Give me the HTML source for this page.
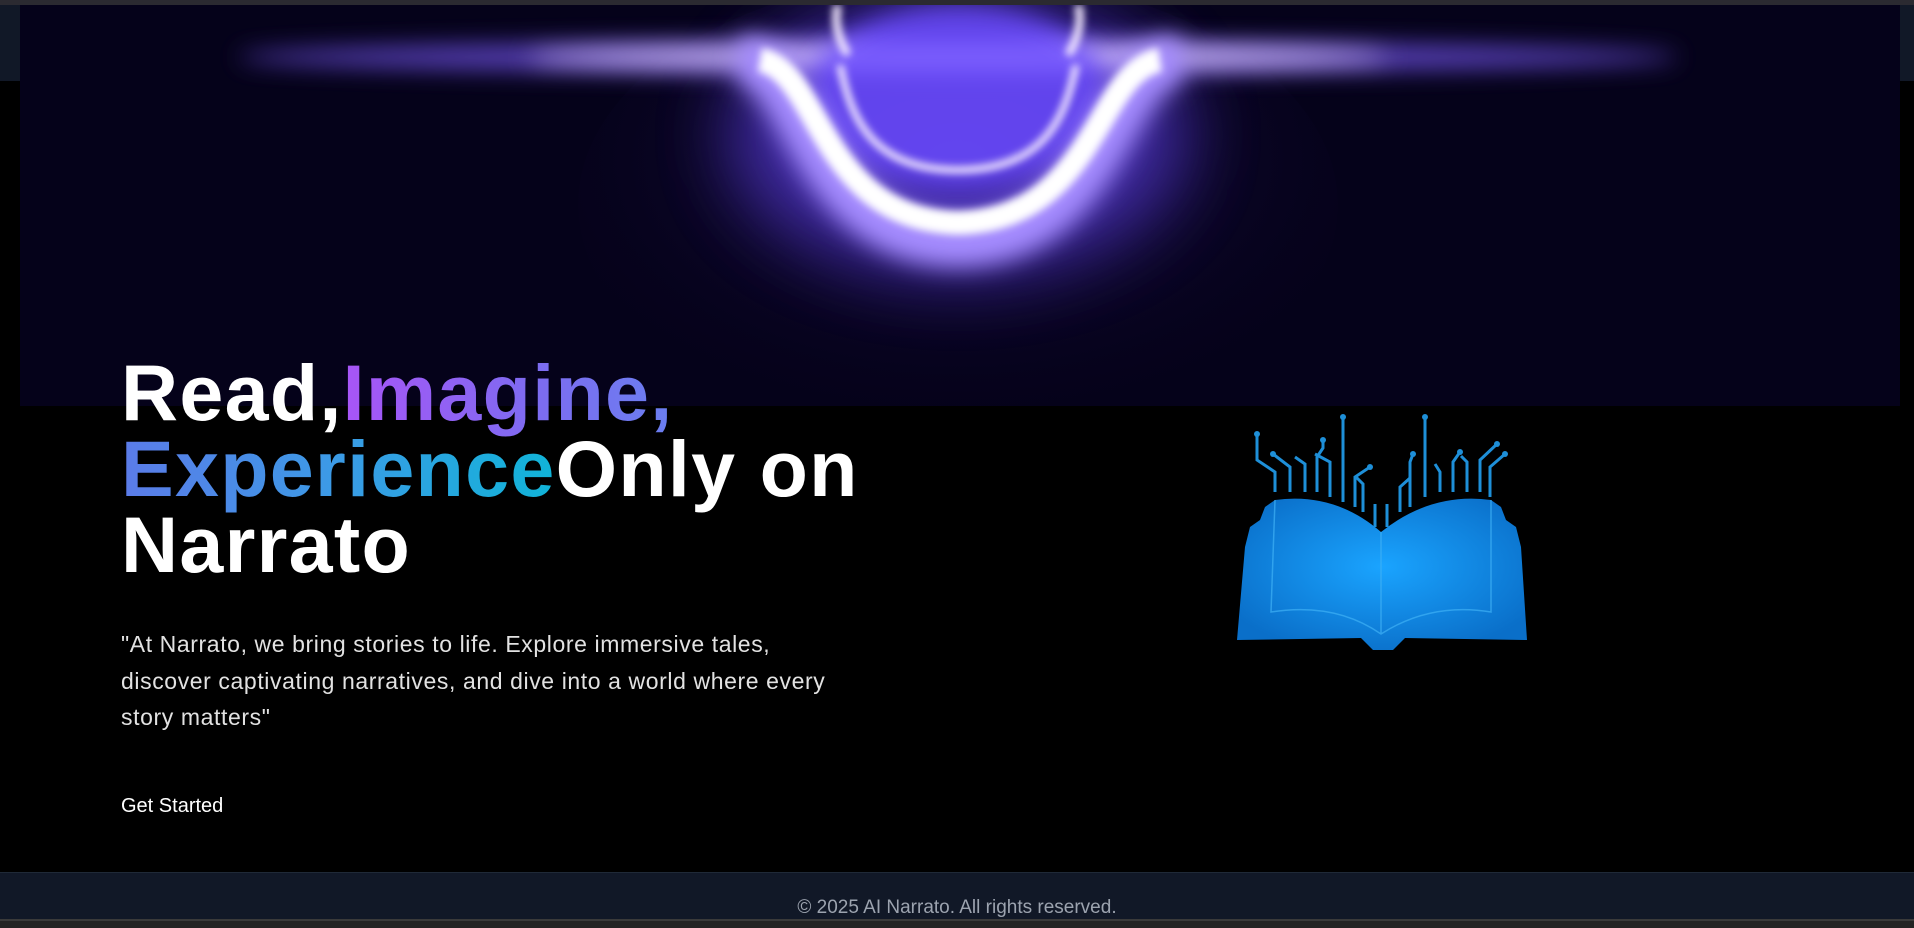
<!DOCTYPE html>
<html><head><meta charset="utf-8"><style>
html,body{margin:0;padding:0;background:#000;width:1914px;height:926px;overflow:hidden;font-family:"Liberation Sans",sans-serif}
.topbar{position:absolute;left:0;top:0;width:1914px;height:5px;background:#2b2a31}
.hdr{position:absolute;left:0;top:5px;width:1914px;height:76px;background:#111827}
.panel{position:absolute;left:20px;top:5px;width:1880px;height:401px}
h1{position:absolute;left:121px;top:355px;margin:0;font-size:79px;line-height:76px;font-weight:bold;color:#fff;letter-spacing:1.3px}
.g1{background:linear-gradient(90deg,#a855f7,#7c6cf0 60%,#6a7ff0);-webkit-background-clip:text;background-clip:text;color:transparent}
.g2{background:linear-gradient(90deg,#5b7be8,#3b9be6 50%,#10b4d8);-webkit-background-clip:text;background-clip:text;color:transparent}
p{position:absolute;left:121px;top:626px;margin:0;width:735px;font-size:23px;line-height:36.6px;color:#e2e2e2;letter-spacing:0.6px}
.btn{position:absolute;left:121px;top:795px;font-size:20px;color:#fff}
.foot{position:absolute;left:0;top:872px;width:1914px;height:47px;background:#111827;border-top:1px solid #1f2937}
.foot span{position:absolute;left:0;width:100%;text-align:center;top:24px;font-size:19px;color:#9ca3af}
.bot{position:absolute;left:0;top:919px;width:1914px;height:7px;background:#232323;border-top:2px solid #3a3a3a}
</style></head><body>
<div class="topbar"></div>
<div class="hdr"></div>
<svg class="panel" viewBox="0 0 1880 401" width="1880" height="401">
<defs>
<filter id="b1" filterUnits="userSpaceOnUse" x="-200" y="-300" width="2300" height="1000"><feGaussianBlur stdDeviation="35"/></filter>
<filter id="b2" filterUnits="userSpaceOnUse" x="-200" y="-300" width="2300" height="1000"><feGaussianBlur stdDeviation="12"/></filter>
<filter id="b3" filterUnits="userSpaceOnUse" x="-200" y="-300" width="2300" height="1000"><feGaussianBlur stdDeviation="4"/></filter>
<radialGradient id="rg" cx="0.5" cy="0.4" r="0.6"><stop offset="0" stop-color="#3a1f8a" stop-opacity=".5"/><stop offset="1" stop-color="#05021a" stop-opacity="0"/></radialGradient>
</defs>
<rect width="1880" height="401" fill="#05021a"/>
<ellipse cx="938" cy="200" rx="380" ry="230" fill="url(#rg)"/>
<ellipse cx="938" cy="130" rx="230" ry="140" fill="#5a3de0" filter="url(#b1)" opacity=".65"/>
<ellipse cx="938" cy="52" rx="720" ry="16" fill="#7d5cff" filter="url(#b2)" opacity=".7"/>
<ellipse cx="938" cy="52" rx="430" ry="9" fill="#e8d8ff" filter="url(#b2)"/>
<ellipse cx="938" cy="90" rx="150" ry="90" fill="#6b4cff" filter="url(#b2)" opacity=".8"/>
<path d="M720 55 C790 60 790 235 938 237 C1086 235 1086 60 1160 55" fill="none" stroke="#a58cff" stroke-width="50" filter="url(#b2)"/>
<path d="M740 55 C800 65 800 215 938 218 C1076 215 1076 65 1140 55" fill="none" stroke="#fff" stroke-width="24" filter="url(#b3)"/>
<path d="M820 60 C830 110 850 165 938 165 C1026 165 1046 110 1056 60" fill="none" stroke="#f2e8ff" stroke-width="7" filter="url(#b3)"/>
<path d="M828 50 C815 30 815 10 818 0 M1048 50 C1061 30 1061 10 1058 0" fill="none" stroke="#f4eaff" stroke-width="8" filter="url(#b3)"/>
</svg>
<h1>Read,<span class="g1">Imagine,</span><br><span class="g2">Experience</span>Only on<br>Narrato</h1>
<p>"At Narrato, we bring stories to life. Explore immersive tales, discover captivating narratives, and dive into a world where every story matters"</p>
<div class="btn">Get Started</div>
<svg style="position:absolute;left:1235px;top:412px" width="296" height="240" viewBox="0 0 296 240">
<defs><radialGradient id="bk" cx="0.5" cy="0.45" r="0.6"><stop offset="0" stop-color="#1aa4ff"/><stop offset="1" stop-color="#0a6fc9"/></radialGradient></defs>
<g stroke="#1e8fd8" stroke-width="3" fill="none">
<path d="M40 80 V60 L22 48 V22 M55 80 V55 L38 42 M70 80 V52 L60 45 M82 80 V45 L88 36 V28 M95 85 V50 L80 42 M108 90 V5 M120 95 V65 L135 55 M128 100 V72 L120 64 M140 115 V92 M152 115 V92 M165 100 V75 L175 66 M175 95 V50 L178 42 M190 85 V5 M205 80 V60 L200 52 M218 80 V50 L225 40 M232 80 V50 L226 44 M245 80 V48 L262 32 M255 85 V55 L270 42"/>
</g>
<g fill="#1e8fd8"><circle cx="22" cy="22" r="3"/><circle cx="38" cy="42" r="3"/><circle cx="88" cy="28" r="3"/><circle cx="108" cy="5" r="3"/><circle cx="135" cy="55" r="3"/><circle cx="190" cy="5" r="3"/><circle cx="262" cy="32" r="3"/><circle cx="270" cy="42" r="3"/><circle cx="225" cy="40" r="3"/><circle cx="178" cy="42" r="3"/></g>
<path d="M10 135 L15 115 L25 108 L30 95 L40 88 Q100 80 146 120 Q196 80 256 88 L266 95 L271 108 L281 115 L286 135 L292 228 L170 226 L158 238 L138 238 L126 226 L2 228 Z" fill="url(#bk)"/>
<path d="M146 120 V222 M40 88 L36 200 Q100 190 146 222 Q196 190 256 200 L256 88" fill="none" stroke="#3fb0f5" stroke-width="1.5" opacity=".7"/>
</svg>
<div class="foot"><span>© 2025 AI Narrato. All rights reserved.</span></div>
<div class="bot"></div>
</body></html>
